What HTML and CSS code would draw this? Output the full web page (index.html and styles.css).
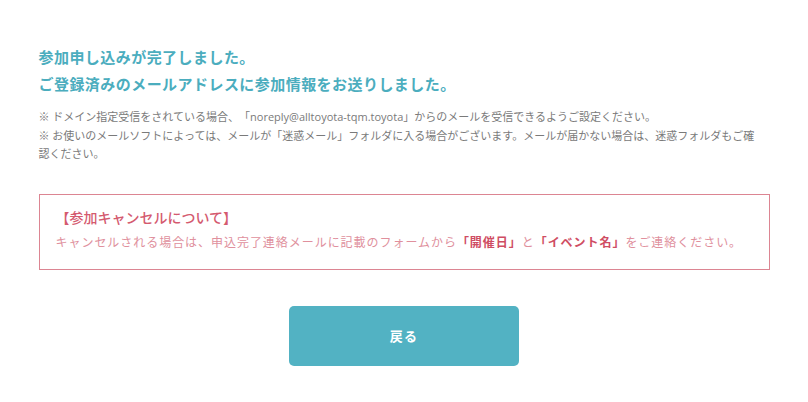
FILE: index.html
```html
<!DOCTYPE html>
<html lang="ja">
<head>
<meta charset="utf-8">
<title>参加申し込み完了</title>
<link rel="stylesheet" href="styles.css">
</head>
<body>
<main class="page">
  <h1 class="lead">参加申し込みが完了しました。<br>ご登録済みのメールアドレスに参加情報をお送りしました。</h1>
  <div class="notes">
    <p>※ ドメイン指定受信をされている場合、「noreply@alltoyota-tqm.toyota」からのメールを受信できるようご設定ください。</p>
    <p>※ お使いのメールソフトによっては、メールが「迷惑メール」フォルダに入る場合がございます。メールが届かない場合は、迷惑フォルダもご確認ください。</p>
  </div>
  <section class="cancel">
    <h2 class="cancel-title">【参加キャンセルについて】</h2>
    <p class="cancel-text">キャンセルされる場合は、申込完了連絡メールに記載のフォームから<strong>「開催日」</strong>と<strong>「イベント名」</strong>をご連絡ください。</p>
  </section>
  <div class="actions">
    <a class="back-btn" href="#">戻る</a>
  </div>
</main>
</body>
</html>
```

FILE: styles.css
```css
* { box-sizing: border-box; }
html, body { margin: 0; padding: 0; background: #fff; }
body {
  font-family: "Open Sans", "Noto Sans CJK JP", sans-serif;
  color: #777;
  text-spacing-trim: space-all;
}
.page {
  width: 731px;
  margin: 0 auto;
  padding-top: 44px;
  display: flex;
  flex-direction: column;
}
.lead {
  margin: 0;
  font-size: 15px;
  line-height: 27px;
  font-weight: 700;
  color: #4badbe;
  letter-spacing: 0.03em;
}
.notes {
  margin-top: 10px;
  padding-right: 8px;
  font-size: 11px;
  line-height: 18.5px;
  color: #7a7a7a;
}
.notes p { margin: 0; }
.cancel {
  margin-top: 30px;
  border: 1px solid #dc8592;
  padding: 13px 16px 16px;
}
.cancel-title {
  margin: 0;
  font-size: 14px;
  line-height: 20px;
  font-weight: 500;
  color: #d45a6f;
}
.cancel-text {
  margin: 5px 0 0;
  font-size: 12px;
  line-height: 20px;
  color: #e0909d;
  letter-spacing: 0.08em;
}
.cancel-text strong { color: #cf4d63; font-weight: 700; }
.actions {
  margin-top: 36px;
  display: flex;
  justify-content: center;
}
.back-btn {
  width: 230px;
  height: 60px;
  display: flex;
  align-items: center;
  justify-content: center;
  background: #52b2c3;
  border-radius: 5px;
  color: #fff;
  font-size: 13px;
  font-weight: 700;
  text-decoration: none;
  letter-spacing: 0.1em;
}
```
